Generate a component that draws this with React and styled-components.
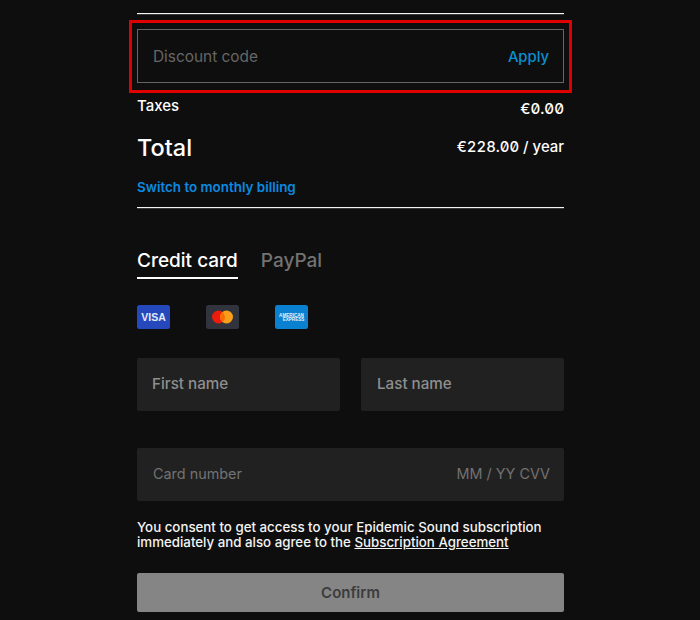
import styled, { createGlobalStyle } from "styled-components";

const GlobalStyle = createGlobalStyle`
  html, body {
    margin: 0;
    height: 620px;
    overflow: hidden;
    background: #0e0e0e;
    font-family: Inter, "Liberation Sans", sans-serif;
    color: #fff;
  }
`;

const Page = styled.div`
  width: 427px;
  margin-left: 137px;
  padding-top: 13px;
`;

const Rule = styled.hr`
  margin: ${(p) => p.$top || 0}px 0 0;
  border: 0;
  height: 1px;
  background: #f4f4f4;
  box-shadow: 0 1px 0 rgba(255, 255, 255, 0.18);
`;

const Highlight = styled.div`
  margin: 6px -8px 0 -8px;
  border: 3px solid #e00000;
  padding: 6px 5px 7px;
`;

const DiscountBox = styled.div`
  height: 51px;
  border: 1px solid #666;
  display: flex;
  align-items: center;
  justify-content: space-between;
  padding: 1px 14px 0 15px;
`;

const DiscountHint = styled.span`
  font-size: 15.4px;
  color: #666;
`;

const ApplyLink = styled.span`
  font-size: 14.8px;
  font-weight: 500;
  color: #0a90d2;
`;

const Row = styled.div`
  display: flex;
  justify-content: space-between;
  align-items: flex-start;
  margin-top: ${(p) => p.$top || 0}px;
`;

const TaxLabel = styled.span`
  font-size: 15px;
  font-weight: 500;
  line-height: 18px;
`;

const Amount = styled.span`
  font-size: ${(p) => p.$size || 15}px;
  font-weight: 500;
  line-height: 18px;
  font-feature-settings: "tnum", "zero";
  margin-top: ${(p) => p.$top || 0}px;
`;

const TotalLabel = styled.span`
  font-size: 23.5px;
  font-weight: 500;
  line-height: 28px;
`;

const SwitchLink = styled.div`
  margin-top: 16px;
  font-size: 13.4px;
  font-weight: 600;
  line-height: 18px;
  color: #0a8ae0;
`;

const Tabs = styled.div`
  display: flex;
  gap: 23px;
  margin-top: 41px;
`;

const Tab = styled.div`
  font-size: 19px;
  font-weight: 500;
  line-height: 24px;
  padding-bottom: 4px;
  color: ${(p) => (p.$active ? "#fff" : "#727272")};
  border-bottom: 2px solid ${(p) => (p.$active ? "#fff" : "transparent")};
`;

const CardIcons = styled.div`
  display: flex;
  gap: 36px;
  margin-top: 26px;
`;

const CardSvg = styled.svg`
  display: block;
  width: 33px;
  height: 24px;
`;

const NameRow = styled.div`
  display: grid;
  grid-template-columns: 1fr 1fr;
  gap: 21px;
  margin-top: 29px;
`;

const Field = styled.div`
  height: 53px;
  box-sizing: border-box;
  border-radius: 2px;
  background: #212121;
  display: flex;
  align-items: center;
  justify-content: space-between;
  padding: 0 14px 2px 15px;
  margin-top: ${(p) => p.$top || 0}px;
`;

const NameHint = styled.span`
  font-size: 15.2px;
  font-weight: 500;
  color: #8f8f8f;
  margin-left: ${(p) => p.$left || 0}px;
`;

const CardHint = styled.span`
  font-size: 14.4px;
  color: #727272;
  margin-left: ${(p) => p.$left || 0}px;
`;

const Consent = styled.p`
  margin: 19px 0 0;
  font-size: 13.3px;
  font-weight: 500;
  line-height: 15px;
  color: #f4f4f4;
`;

const AgreementLink = styled.span`
  text-decoration: underline;
`;

const ConfirmButton = styled.div`
  margin-top: 23px;
  height: 39px;
  border-radius: 2px;
  background: #858585;
  color: #3c3c3c;
  font-size: 15px;
  font-weight: 600;
  display: flex;
  align-items: center;
  justify-content: center;
`;

const VisaIcon = () => (
  <CardSvg viewBox="0 0 33 24">
    <rect width="33" height="24" rx="2.5" fill="#2549bd" />
    <text x="16.5" y="16" fontFamily="Liberation Sans" fontSize="10.5" fontWeight="700" fill="#e4e9f8" textAnchor="middle">VISA</text>
  </CardSvg>
);

const MastercardIcon = () => (
  <CardSvg viewBox="0 0 33 24">
    <rect width="33" height="24" rx="2.5" fill="#31343d" />
    <circle cx="12.5" cy="12" r="6.5" fill="#eb1c0c" />
    <circle cx="20.5" cy="12" r="6.5" fill="#f79e1b" />
    <path d="M16.5 6.9a6.5 6.5 0 0 1 0 10.2a6.5 6.5 0 0 1 0-10.2z" fill="#f96a05" />
  </CardSvg>
);

const AmexIcon = () => (
  <CardSvg viewBox="0 0 33 24">
    <rect width="33" height="24" rx="2.5" fill="#0a80d0" />
    <text x="16.5" y="11.5" fontFamily="Liberation Sans" fontSize="4.6" fontWeight="700" fill="#e6f3fb" textAnchor="middle">AMERICAN</text>
    <text x="18.5" y="16.2" fontFamily="Liberation Sans" fontSize="4.6" fontWeight="700" fill="#e6f3fb" textAnchor="middle">EXPRESS</text>
  </CardSvg>
);

export default function App() {
  return (
    <>
      <GlobalStyle />
      <Page>
        <Rule />
        <Highlight>
          <DiscountBox>
            <DiscountHint>Discount code</DiscountHint>
            <ApplyLink>Apply</ApplyLink>
          </DiscountBox>
        </Highlight>
        <Row $top={4}>
          <TaxLabel>Taxes</TaxLabel>
          <Amount $size={15.2} $top={3}>€0.00</Amount>
        </Row>
        <Row $top={16}>
          <TotalLabel>Total</TotalLabel>
          <Amount $size={14.9} $top={4}>€228.00 / year</Amount>
        </Row>
        <SwitchLink>Switch to monthly billing</SwitchLink>
        <Rule $top={11} />
        <Tabs>
          <Tab $active>Credit card</Tab>
          <Tab>PayPal</Tab>
        </Tabs>
        <CardIcons>
          <VisaIcon />
          <MastercardIcon />
          <AmexIcon />
        </CardIcons>
        <NameRow>
          <Field>
            <NameHint>First name</NameHint>
          </Field>
          <Field>
            <NameHint $left={1}>Last name</NameHint>
          </Field>
        </NameRow>
        <Field $top={37}>
          <CardHint $left={1}>Card number</CardHint>
          <CardHint>MM / YY CVV</CardHint>
        </Field>
        <Consent>
          You consent to get access to your Epidemic Sound subscription
          <br />
          immediately and also agree to the <AgreementLink>Subscription Agreement</AgreementLink>
        </Consent>
        <ConfirmButton>Confirm</ConfirmButton>
      </Page>
    </>
  );
}
